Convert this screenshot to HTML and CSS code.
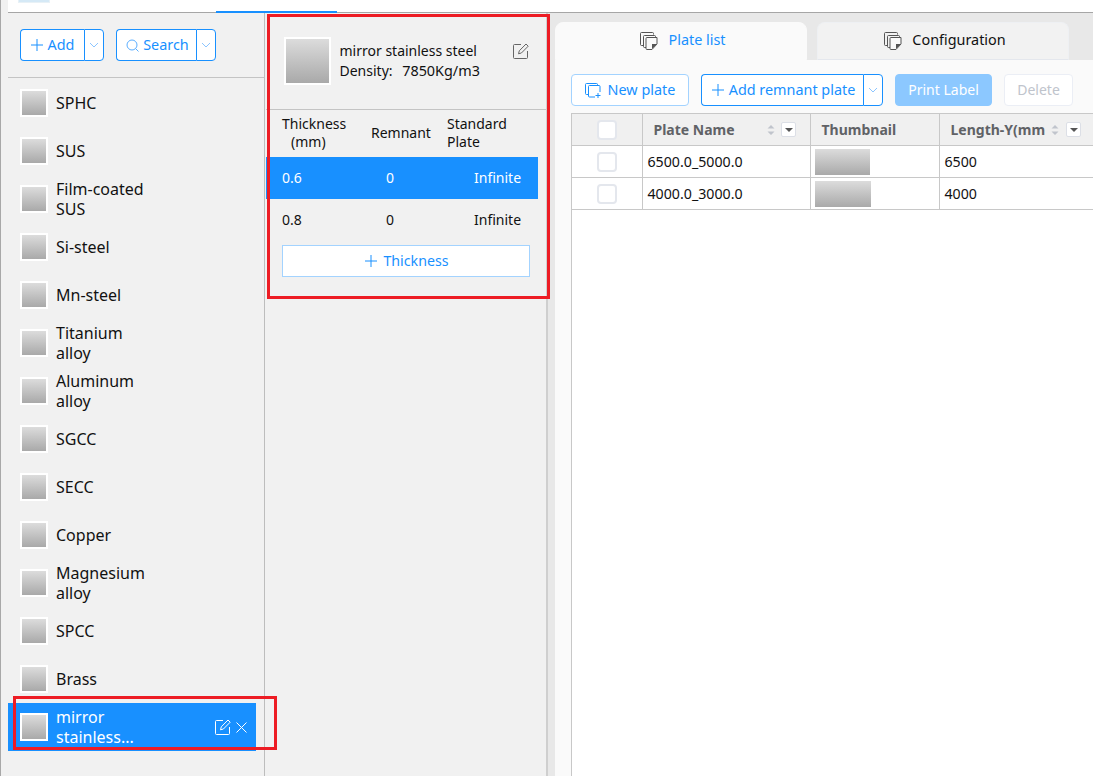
FILE: index.html
```html
<!DOCTYPE html>
<html lang="en">
<head>
<meta charset="utf-8">
<title>Materials</title>
<link rel="stylesheet" href="styles.css">
</head>
<body>
<svg class="defs" width="0" height="0" aria-hidden="true">
  <symbol id="i-edit" viewBox="0 0 16 16"><path d="M14.5 8v6.5a1 1 0 0 1-1 1h-12a1 1 0 0 1-1-1v-12a1 1 0 0 1 1-1H8" fill="none" stroke="currentColor"/><path d="M5.5 10.8l.8-3L13 1l2.2 2.2-6.800 6.800z" fill="none" stroke="currentColor"/></symbol>
  <symbol id="i-plus" viewBox="0 0 12 12"><path d="M6 0v12M0 6h12" stroke="currentColor" fill="none"/></symbol>
  <symbol id="i-down" viewBox="0 0 10 6"><path d="M1 1l4 4 4-4" stroke="currentColor" fill="none"/></symbol>
  <symbol id="i-stack" viewBox="0 0 20 20"><path d="M5.500 15.500h-2a1 1 0 0 1-1-1v-11a1 1 0 0 1 1-1h11a1 1 0 0 1 1 1v1" fill="none" stroke="currentColor"/><path d="M8 17.500H6.500a1 1 0 0 1-1-1v-10a1 1 0 0 1 1-1h10a1 1 0 0 1 1 1V7" fill="none" stroke="currentColor"/><path d="M9 7.500h10v6.500l-5 5.500H9a1 1 0 0 1-1-1v-10a1 1 0 0 1 1-1z" fill="#fafafa" stroke="currentColor"/><path d="M14 19l5-5h-5z" fill="currentColor"/></symbol>
  <symbol id="i-new" viewBox="0 0 16 16"><path d="M3.500 12.500H1.500a1 1 0 0 1-1-1v-9a1 1 0 0 1 1-1h10a1 1 0 0 1 1 1v1" fill="none" stroke="currentColor"/><path d="M10 15H4.500a1 1 0 0 1-1-1V4.500a1 1 0 0 1 1-1H14a1 1 0 0 1 1 1V10" fill="none" stroke="currentColor"/><path d="M13 11v5M10.500 13.500h5" stroke="currentColor" fill="none"/></symbol>
  <symbol id="i-search" viewBox="0 0 13 13"><circle cx="6" cy="6" r="5" fill="none" stroke="currentColor"/><path d="M9.500 9.500l3 3" stroke="currentColor" fill="none"/></symbol>
  <symbol id="i-close" viewBox="0 0 11 11"><path d="M.5.500l10 10M10.500.500l-10 10" stroke="currentColor" fill="none"/></symbol>
  <symbol id="i-sort" viewBox="0 0 8 10"><path d="M4 0l3.500 3.500h-7zM4 10L.5 6.500h7z" fill="currentColor"/></symbol>
</svg>

<div class="app">
  <div class="rail"></div>
  <div class="shell">
    <header class="topbar">
      <div class="logo"></div>
      <div class="top-tab"></div>
    </header>
    <div class="main">
      <aside class="sidebar">
        <div class="side-tools">
          <div class="split split-add">
            <button class="split-main"><svg class="ico-plus"><use href="#i-plus"/></svg>Add</button>
            <button class="split-arrow"><svg class="ico-down"><use href="#i-down"/></svg></button>
          </div>
          <div class="split split-search">
            <button class="split-main"><svg class="ico-search"><use href="#i-search"/></svg>Search</button>
            <button class="split-arrow"><svg class="ico-down"><use href="#i-down"/></svg></button>
          </div>
        </div>
        <ul class="mat-list">
          <li class="mat"><span class="swatch"></span><span class="mat-name">SPHC</span></li>
          <li class="mat"><span class="swatch"></span><span class="mat-name">SUS</span></li>
          <li class="mat"><span class="swatch"></span><span class="mat-name">Film-coated SUS</span></li>
          <li class="mat"><span class="swatch"></span><span class="mat-name">Si-steel</span></li>
          <li class="mat"><span class="swatch"></span><span class="mat-name">Mn-steel</span></li>
          <li class="mat"><span class="swatch"></span><span class="mat-name">Titanium alloy</span></li>
          <li class="mat"><span class="swatch"></span><span class="mat-name">Aluminum alloy</span></li>
          <li class="mat"><span class="swatch"></span><span class="mat-name">SGCC</span></li>
          <li class="mat"><span class="swatch"></span><span class="mat-name">SECC</span></li>
          <li class="mat"><span class="swatch"></span><span class="mat-name">Copper</span></li>
          <li class="mat"><span class="swatch"></span><span class="mat-name">Magnesium alloy</span></li>
          <li class="mat"><span class="swatch"></span><span class="mat-name">SPCC</span></li>
          <li class="mat"><span class="swatch"></span><span class="mat-name">Brass</span></li>
          <li class="mat mat-active"><span class="swatch"></span><span class="mat-name">mirror stainless...</span>
            <span class="mat-actions"><svg class="ico-edit"><use href="#i-edit"/></svg><svg class="ico-close"><use href="#i-close"/></svg></span>
          </li>
        </ul>
      </aside>

      <section class="detail">
        <div class="detail-head">
          <span class="swatch swatch-lg"></span>
          <div class="detail-info">
            <div>mirror stainless steel</div>
            <div>Density: <span class="density">7850Kg/m3</span></div>
          </div>
          <svg class="ico-edit ico-edit-dark"><use href="#i-edit"/></svg>
        </div>
        <div class="thick-head">
          <span class="tc-a tc-a-head">Thickness<br><span class="mm">(mm)</span></span>
          <span class="tc-b">Remnant</span>
          <span class="tc-c">Standard Plate</span>
        </div>
        <div class="thick-row thick-active">
          <span class="tv-a">0.6</span><span class="tv-b">0</span><span class="tv-c">Infinite</span>
        </div>
        <div class="thick-row">
          <span class="tv-a">0.8</span><span class="tv-b">0</span><span class="tv-c">Infinite</span>
        </div>
        <button class="add-thick"><svg class="ico-plus"><use href="#i-plus"/></svg>Thickness</button>
      </section>

      <section class="content">
        <div class="tabs">
          <div class="tab tab-active"><svg class="ico-stack"><use href="#i-stack"/></svg>Plate list</div>
          <div class="tab"><svg class="ico-stack"><use href="#i-stack"/></svg>Configuration</div>
        </div>
        <div class="pane">
          <div class="toolbar">
            <button class="btn btn-new"><svg class="ico-new"><use href="#i-new"/></svg>New plate</button>
            <div class="split split-remnant">
              <button class="split-main"><svg class="ico-plus"><use href="#i-plus"/></svg>Add remnant plate</button>
              <button class="split-arrow"><svg class="ico-down"><use href="#i-down"/></svg></button>
            </div>
            <button class="btn btn-print">Print Label</button>
            <button class="btn btn-delete">Delete</button>
          </div>
          <div class="table-wrap">
            <table class="grid">
              <colgroup><col class="c1"><col class="c2"><col class="c3"><col class="c4"></colgroup>
              <thead>
                <tr>
                  <th class="cell-check"><span class="check"></span></th>
                  <th><div class="th-in th-name"><span class="th-label">Plate Name</span><svg class="ico-sort"><use href="#i-sort"/></svg><span class="filter"></span></div></th>
                  <th><div class="th-in th-name"><span class="th-label">Thumbnail</span></div></th>
                  <th><div class="th-in th-len"><span class="th-label">Length-Y(mm)</span><svg class="ico-sort"><use href="#i-sort"/></svg><span class="filter"></span></div></th>
                </tr>
              </thead>
              <tbody>
                <tr>
                  <td class="cell-check"><span class="check"></span></td>
                  <td>6500.0_5000.0</td>
                  <td class="cell-thumb"><span class="thumb"></span></td>
                  <td>6500</td>
                </tr>
                <tr>
                  <td class="cell-check"><span class="check"></span></td>
                  <td>4000.0_3000.0</td>
                  <td class="cell-thumb"><span class="thumb thumb-wide"></span></td>
                  <td>4000</td>
                </tr>
              </tbody>
            </table>
          </div>
        </div>
      </section>
    </div>
  </div>
</div>

<div class="mark mark-detail"></div>
<div class="mark mark-item"></div>
</body>
</html>
```

FILE: styles.css
```css
* { box-sizing: border-box; }
html, body { margin: 0; padding: 0; height: 100%; }
body {
  width: 1093px;
  height: 776px;
  overflow: hidden;
  position: relative;
  background: #f1f1f1;
  color: #111;
  font: 14px/20px "Noto Sans", "Noto Sans CJK SC", sans-serif;
}
.defs { position: absolute; }
svg { display: block; flex: none; }
button { font: inherit; cursor: pointer; padding: 0; margin: 0; background: none; }
ul { list-style: none; margin: 0; padding: 0; }

.app { display: flex; height: 776px; }
.rail { width: 8px; flex: none; border-left: 1px solid #a8a8a8; background: #f1f1f1; }
.shell { flex: 1; min-width: 0; display: flex; flex-direction: column; }

.topbar {
  height: 13px;
  flex: none;
  background: #fff;
  border-bottom: 1px solid #a6a6a6;
  display: flex;
  padding-left: 10px;
}
.logo { width: 32px; height: 3px; background: #d5e9f6; border: 1px solid #e8f1f6; border-top: 0; }
.top-tab { width: 121px; height: 2px; margin: 11px 0 0 166px; background: #1890ff; }

.main { flex: 1; min-height: 0; display: flex; }

.sidebar { width: 257px; flex: none; border-right: 1px solid #bdbdbd; }
.side-tools {
  height: 65px;
  padding: 16px 0 0 12px;
  border-bottom: 1px solid #c4c4c4;
  display: flex;
  gap: 12px;
}
.split { display: flex; height: 32px; font-size: 14.4px; }
.split-main, .split-arrow {
  color: #1890ff;
  background: #fff;
  border: 1px solid #1890ff;
  display: flex;
  align-items: center;
  justify-content: center;
}
.split-main { border-radius: 4px 0 0 4px; border-right: 0; gap: 5px; }
.split-arrow { border-radius: 0 4px 4px 0; width: 20px; }
.split-add .split-main { width: 64px; }
.split-search .split-main { width: 80px; gap: 4px; padding-left: 2px; }
.split-remnant .split-main { width: 162px; padding-left: 2px; }
.ico-plus { width: 12px; height: 12px; }
.ico-down { width: 10px; height: 6px; color: #8cc5ff; }
.ico-search { width: 13px; height: 13px; color: #5aaeff; }

.mat-list { padding-top: 1px; }
.mat {
  width: 248px;
  height: 48px;
  padding-left: 12px;
  display: flex;
  align-items: center;
}
.swatch {
  width: 28px;
  height: 28px;
  flex: none;
  border: 2px solid #fff;
  background: linear-gradient(#dcdcdc, #a9a9a9);
}
.mat-name { width: 96px; margin-left: 8px; line-height: 20px; font-size: 16px; }
.mat-active { background: #1890ff; color: #fff; }
.mat-actions { margin-left: auto; padding-right: 9px; display: flex; align-items: center; gap: 5px; }
.ico-edit { width: 16px; height: 16px; }
.ico-close { width: 11px; height: 11px; }

.detail { width: 283px; flex: none; border-right: 2px solid #cfcfcf; padding-left: 1px; }
.detail-head {
  height: 97px;
  padding: 0 17px 0 18px;
  border-bottom: 1px solid #c4c4c4;
  display: flex;
  align-items: center;
}
.swatch-lg { width: 47px; height: 48px; }
.detail-info { margin-left: 8.5px; flex: 1; }
.density { margin-left: 6px; font-size: 14.4px; }
.ico-edit-dark { color: #666; margin-bottom: 20px; }
.thick-head { height: 47px; display: flex; align-items: center; padding: 0 0 2px 16px; line-height: 18px; width: 272px; }
.tc-a { width: 89px; }
.tc-a-head .mm { padding-left: 9px; }
.tc-b { width: 76px; }
.tc-c { width: 80px; }
.thick-row { height: 42px; width: 272px; display: flex; align-items: center; padding-left: 16px; }
.thick-active { background: #1890ff; color: #fff; }
.tv-a { width: 104px; }
.tv-b { width: 88px; }
.add-thick {
  display: flex;
  align-items: center;
  justify-content: center;
  gap: 6px;
  width: 248px;
  height: 32px;
  margin: 4px 0 0 16px;
  padding-left: 2px;
  color: #1890ff;
  background: #fff;
  border: 1px solid #a3d3ff;
  font-size: 14.2px;
}

.content { flex: 1; min-width: 0; background: #e8e8e8; padding: 9px 0 0 7px; display: flex; flex-direction: column; }
.tabs { display: flex; gap: 10px; height: 38px; flex: none; }
.tab {
  width: 252px;
  height: 38px;
  padding: 0 0 2px 2px;
  display: flex;
  align-items: center;
  justify-content: center;
  gap: 10px;
  font-size: 14.4px;
  background: #f2f2f2;
  border: 1px solid #eef0f3;
  border-bottom-color: #e4e7ed;
  border-radius: 8px 8px 0 0;
}
.tab-active { background: #fafafa; color: #1890ff; border-color: #fafafa; }
.ico-stack { width: 20px; height: 20px; color: #555; }
.pane { flex: 1; min-height: 0; background: #fafafa; padding: 14px 0 0 16px; display: flex; flex-direction: column; }
.toolbar { display: flex; gap: 12px; height: 32px; flex: none; margin-bottom: 7px; }
.btn { height: 32px; border-radius: 4px; display: flex; align-items: center; justify-content: center; }
.btn-new { width: 118px; gap: 7px; color: #1890ff; background: #fff; border: 1px solid #a3d3ff; font-size: 14.4px; }
.ico-new { width: 16px; height: 16px; }
.btn-print { width: 97px; color: #fff; background: #8cc8ff; border: 1px solid #8cc8ff; }
.btn-delete { width: 69px; color: #c0c4cc; background: #fff; border: 1px solid #ebeef5; }

.table-wrap { flex: 1; min-height: 0; overflow: hidden; border-left: 1px solid #c8c8c8; background: #fff; }
.grid { border-collapse: collapse; table-layout: fixed; width: 522px; }
.c1 { width: 70px; }
.c2 { width: 168px; }
.c3 { width: 129px; }
.c4 { width: 155px; }
.grid th, .grid td {
  height: 32px;
  padding: 0;
  border: 1px solid #c8c8c8;
  border-left: 0;
  text-align: left;
  font-weight: 400;
  overflow: hidden;
  white-space: nowrap;
}
.grid thead th { background: #f0f0f0; }
.grid td { padding-left: 5px; background: #fff; font-size: 14.2px; }
.grid td.cell-check, .grid th.cell-check { padding: 0; }
.check {
  display: block;
  width: 20px;
  height: 20px;
  margin-left: 25px;
  background: #fff;
  border: 2px solid #e4e7ed;
  border-radius: 4px;
}
.th-in { display: flex; align-items: center; height: 30px; }
.th-name { padding-left: 11px; }
.th-len { padding-left: 11px; }
.th-label { font-weight: 700; color: #606266; }
.th-name .th-label { width: 113px; }
.th-len .th-label { width: 94px; overflow: hidden; }
.ico-sort { width: 8px; height: 10px; color: #c0c4cc; }
.th-len .ico-sort { margin-left: 6px; }
.filter {
  position: relative;
  width: 15px;
  height: 15px;
  margin-left: 6px;
  background: #fff;
  border: 1px solid #dcdfe6;
  border-radius: 2px;
}
.th-len .filter { margin-left: 7px; }
.filter::after {
  content: "";
  position: absolute;
  left: 3px;
  top: 5px;
  border: 4px solid transparent;
  border-top: 4px solid #555;
  border-bottom: 0;
}
.grid td.cell-thumb { padding-left: 4px; }
.thumb { display: block; width: 55px; height: 26px; background: linear-gradient(#dcdcdc, #a9a9a9); }
.thumb-wide { width: 56px; }

.mark { position: absolute; border: 3px solid #ed1c24; pointer-events: none; }
.mark-detail { left: 267px; top: 14px; width: 283px; height: 285px; }
.mark-item { left: 13px; top: 696px; width: 264px; height: 54px; }
```
